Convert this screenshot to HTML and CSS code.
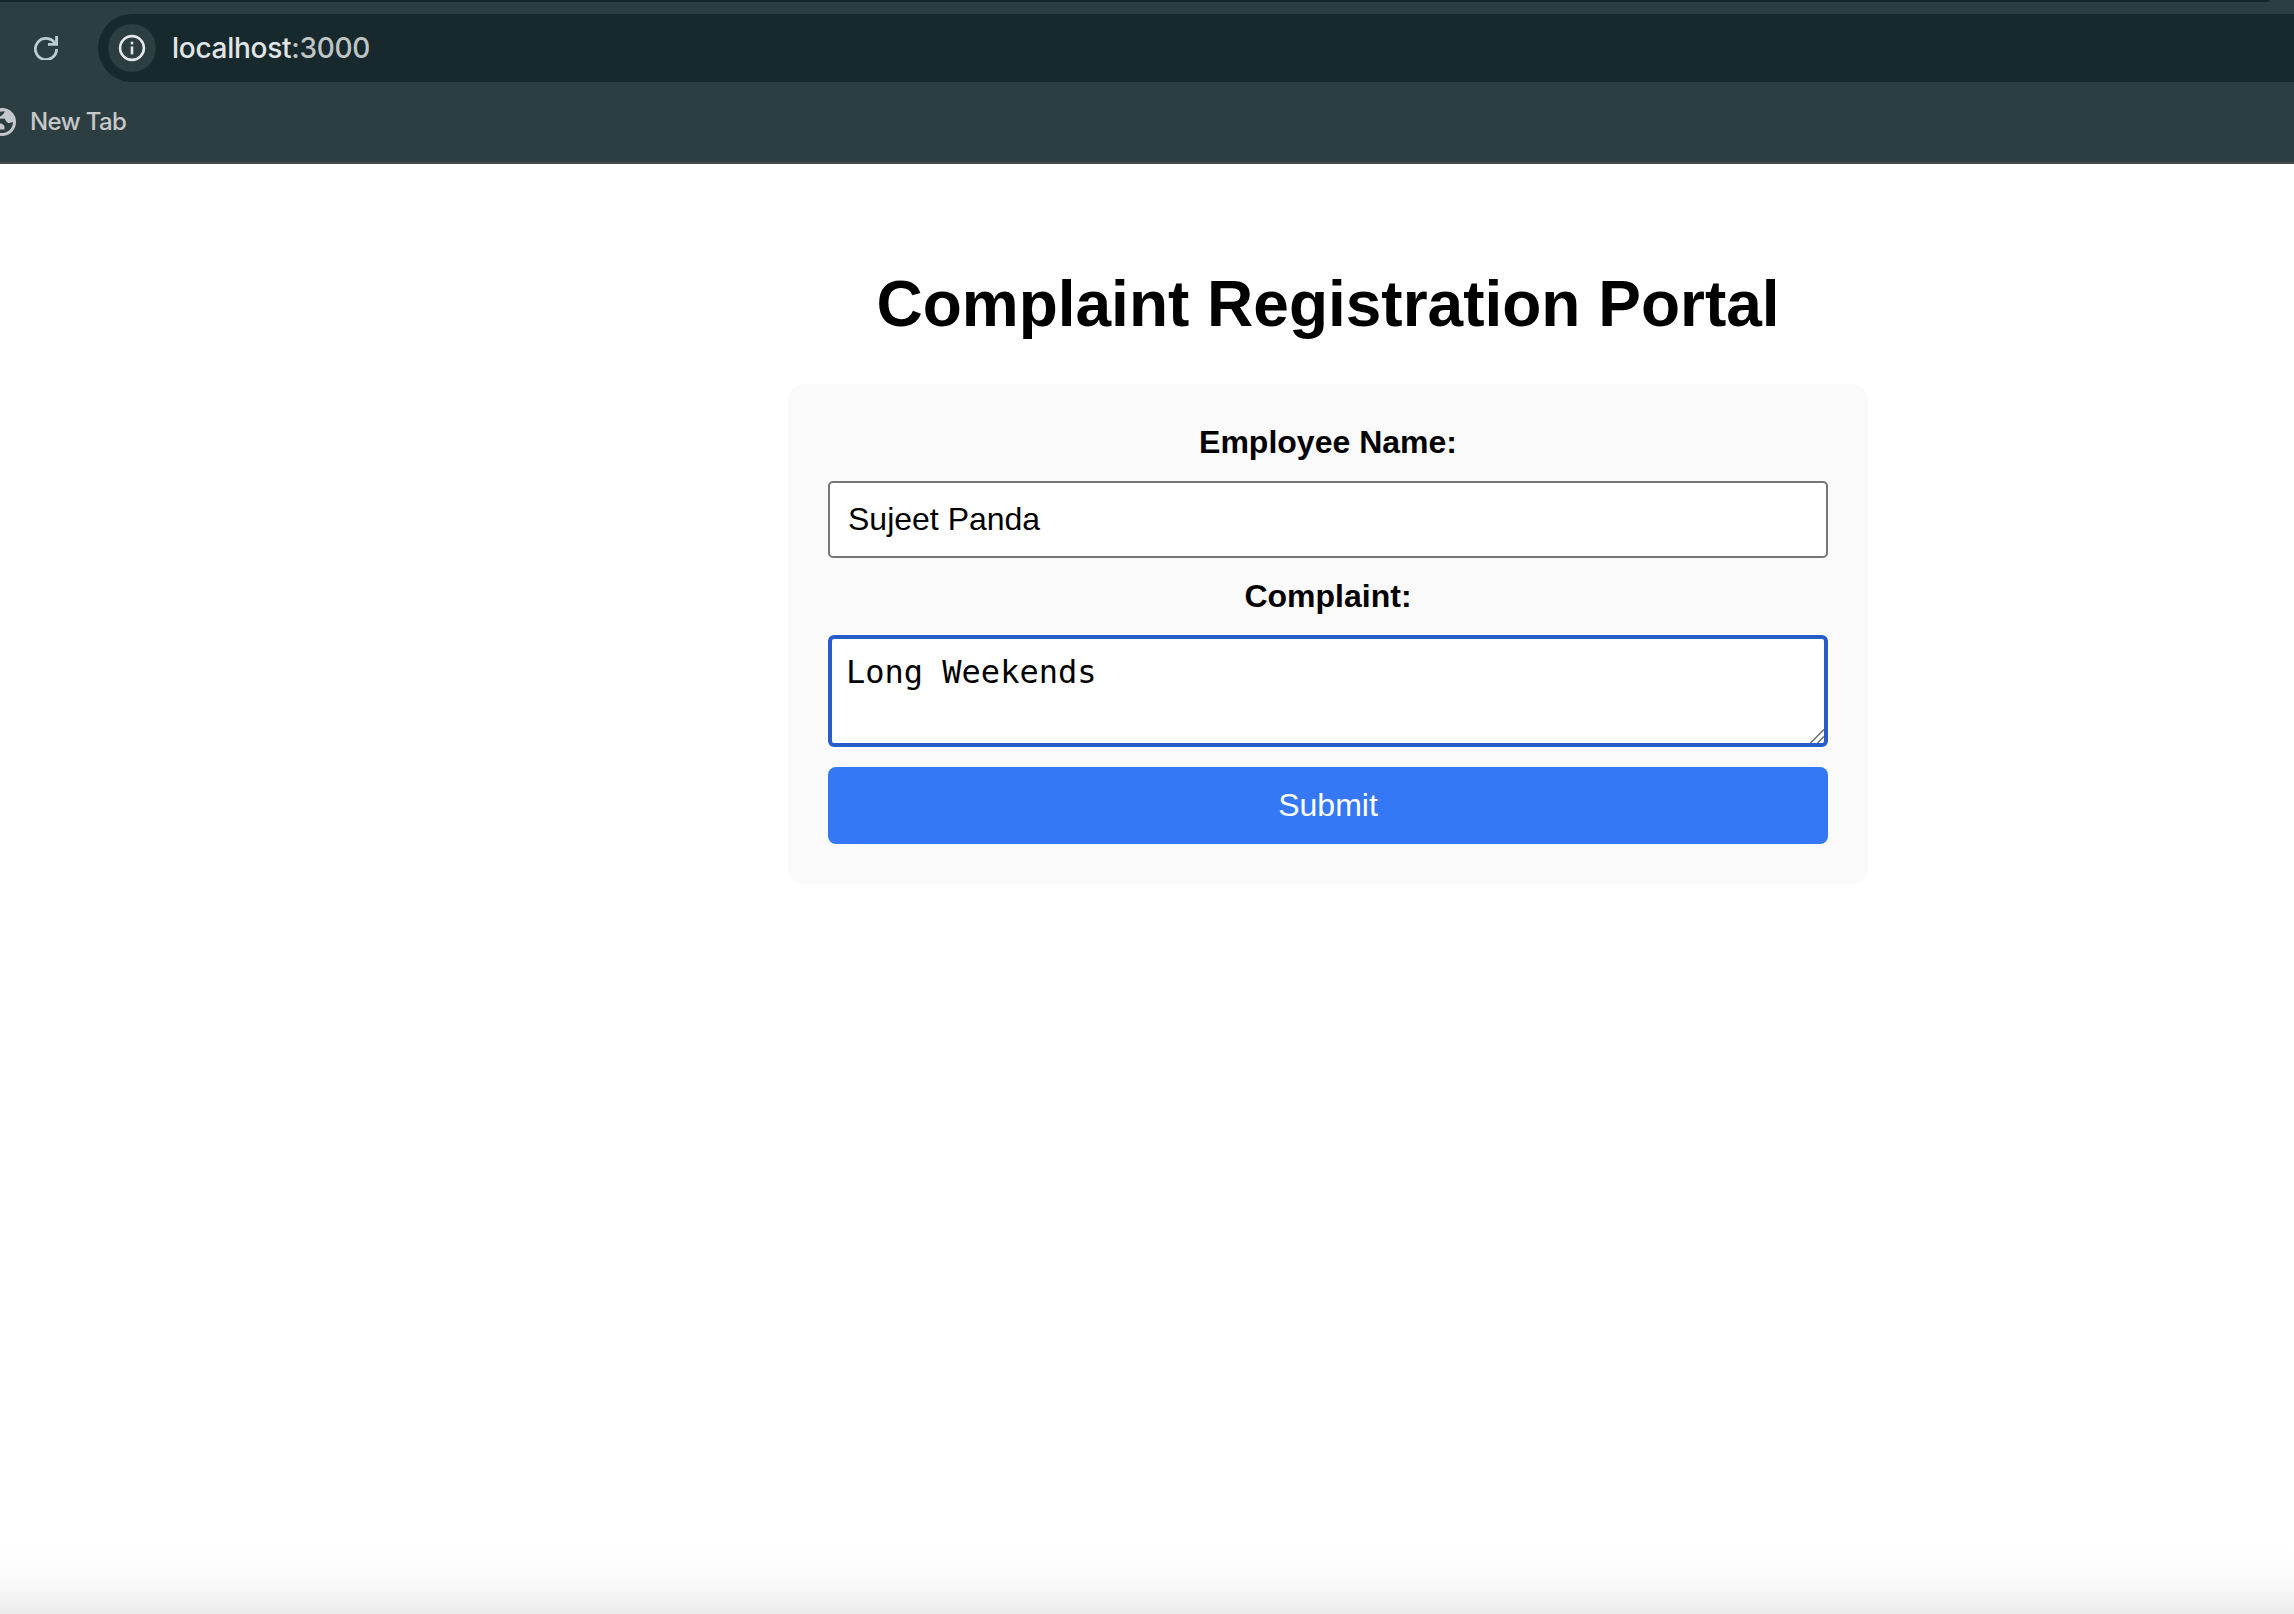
FILE: index.html
```html
<!DOCTYPE html>
<html lang="en">
<head>
<meta charset="utf-8">
<title>Complaint Registration Portal</title>
<link rel="stylesheet" href="styles.css">
</head>
<body>
<div class="window">
  <header class="browser">
    <div class="tab-strip"></div>
    <div class="toolbar">
      <svg class="reload" viewBox="0 0 24 24" aria-hidden="true">
        <path d="M21 7.4A10.6 10.6 0 1 0 22.6 13" fill="none" stroke="currentColor" stroke-width="2.8"/>
        <path d="M14 8.4H22.6V0" fill="none" stroke="currentColor" stroke-width="2.9"/>
      </svg>
      <div class="address">
        <span class="site-info">
          <svg viewBox="0 0 28 28" aria-hidden="true">
            <circle cx="14" cy="14" r="11.9" fill="none" stroke="currentColor" stroke-width="2.6"/>
            <rect x="12.7" y="12.4" width="2.6" height="8" fill="currentColor"/>
            <rect x="12.7" y="7.7" width="2.6" height="2.7" fill="currentColor"/>
          </svg>
        </span>
        <span class="url">localhost<span class="port">:3000</span></span>
      </div>
    </div>
    <nav class="bookmarks">
      <svg class="globe" viewBox="0 0 28 28" aria-hidden="true">
        <circle cx="14" cy="14" r="14" fill="#c4c7cc"/>
        <path d="M9 4L17 3.2 15.4 6 12.8 8.2H9Z" fill="#2d3e42"/>
        <path d="M10 11L16.6 10.4 18 13.2 20.5 15.2 25 14A11 11 0 0 1 12 24.9V21.4H16.4V17.8L13.6 15.4H3V11Z" fill="#2d3e42"/>
      </svg>
      <span class="bookmark-name">New Tab</span>
    </nav>
  </header>
  <main class="page">
    <h1>Complaint Registration Portal</h1>
    <form class="form">
      <label for="name">Employee Name:</label>
      <input id="name" class="field" type="text" value="Sujeet Panda">
      <label for="complaint">Complaint:</label>
      <div class="area">
        <textarea id="complaint">Long Weekends</textarea>
        <svg class="grip" viewBox="0 0 14 14" aria-hidden="true"><path d="M.5 14 14 .5M7.5 14 14 7.5" stroke="#666" stroke-width="1.4"/></svg>
      </div>
      <button type="button">Submit</button>
    </form>
  </main>
  <div class="fade"></div>
</div>
</body>
</html>
```
FILE: styles.css
```css
* { box-sizing: border-box; }
body { margin: 0; background: #fff; color: #000; font-family: "Liberation Sans", Arial, sans-serif; }
.window { display: flex; flex-direction: column; height: 1614px; overflow: hidden; }
.browser { height: 164px; flex: none; background: #2d3e42; border-bottom: 2px solid #48494a; font-family: Inter, sans-serif; }
.tab-strip { width: 2270px; height: 2px; background: #14262b; border-bottom-right-radius: 4px 2px; }
.toolbar { display: flex; align-items: center; padding-top: 12px; }
.reload { width: 24px; height: 24px; margin: 0 40px 0 34px; color: #b7cdd3; }
.address { flex: 1; height: 68px; display: flex; align-items: center; gap: 16px; padding-left: 10px; background: #18292d; border-radius: 34px 0 0 34px; }
.site-info { width: 48px; height: 48px; display: grid; place-items: center; border-radius: 50%; background: #2d3e42; color: #e3e7e7; }
.site-info svg { width: 28px; height: 28px; }
.url { color: #e1e5e5; font-size: 28px; line-height: 36px; font-weight: 500; letter-spacing: -.28px; }
.port { color: #bfc5c5; }
.bookmarks { display: flex; align-items: center; height: 80px; color: #c5c9c9; font-size: 24px; gap: 14px; }
.bookmark-name { font-weight: 500; letter-spacing: -.6px; padding-bottom: 2px; }
.globe { width: 28px; height: 28px; margin-left: -12px; }
.page { width: 1080px; margin-left: 788px; padding-top: 104px; }
h1 { margin: 0; font-size: 64px; line-height: 72px; text-align: center; white-space: nowrap; }
.form { margin-top: 44px; height: 500px; padding: 40px; border-radius: 16px; background: #fafafa; display: flex; flex-direction: column; font-size: 32px; }
label { font-weight: bold; line-height: 36px; text-align: center; }
.field { height: 77px; margin: 21px 0 20px; padding: 0 18px; border: 2px solid #767676; border-radius: 5px; background: #fff; color: #000; font: 32px "Liberation Sans", Arial, sans-serif; outline: 0; }
.area { height: 112px; margin: 21px 0 20px; position: relative; }
textarea { display: block; width: 100%; height: 100%; padding: 14px; border: 4px solid #285dc9; border-radius: 6px; box-shadow: 0 0 0 2px #fff; resize: none; outline: 0; overflow: hidden; color: #000; background: #fff; font: 32px/38px "DejaVu Sans Mono", monospace; }
.grip { position: absolute; right: 4px; bottom: 4px; width: 14px; height: 14px; }
button { height: 77px; padding: 0; border: 0; border-radius: 8px; background: #3478f6; color: #fff; font: 32px "Liberation Sans", Arial, sans-serif; }
.fade { height: 74px; flex: none; margin-top: auto; background: linear-gradient(#fff, #fdfdfd 35%, #f8f8f8 65%, #ebebeb); }
```
